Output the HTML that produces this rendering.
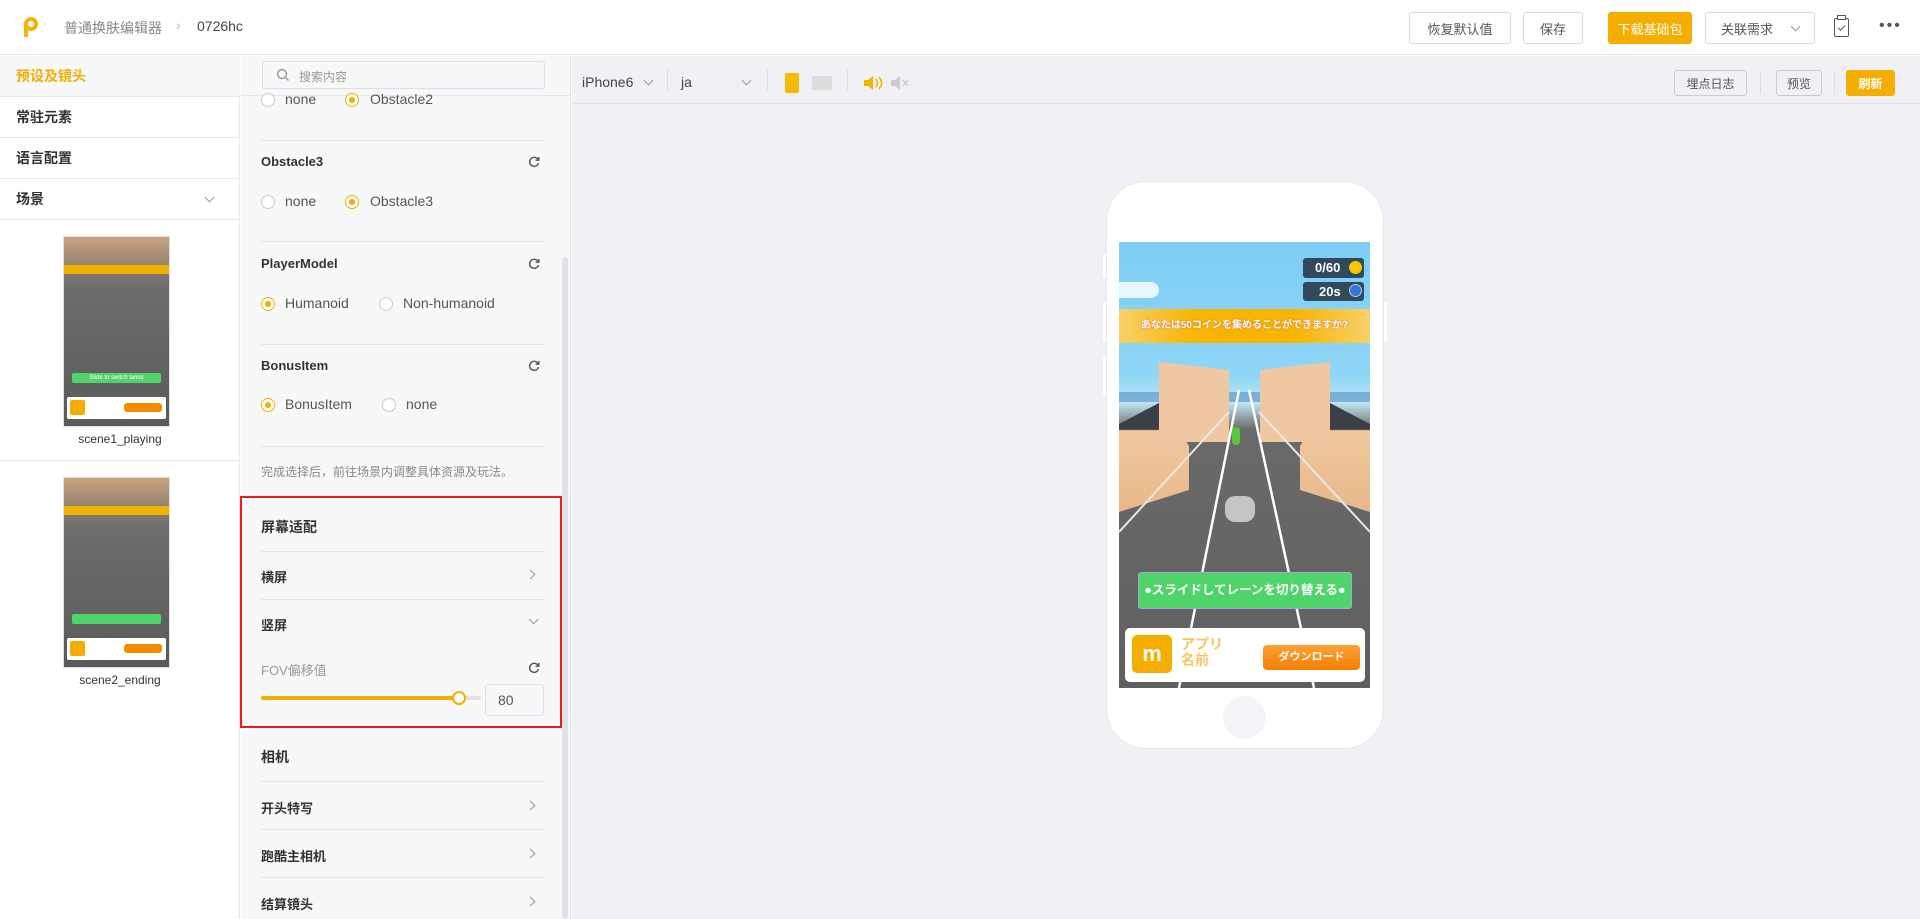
<!DOCTYPE html>
<html><head><meta charset="utf-8">
<style>
*{box-sizing:border-box;margin:0;padding:0}
body{width:1920px;height:919px;overflow:hidden;font-family:"Liberation Sans","Noto Sans CJK SC",sans-serif;font-size:13px;color:#333;background:#fff;position:relative}
.a{position:absolute}
.btn{position:absolute;border:1px solid #d9d9d9;border-radius:3px;background:#fff;font-size:13px;color:#555;display:flex;align-items:center;justify-content:center}
.y{background:#f5ad00;border-color:#f5ad00;color:#fff}
.nav{position:absolute;left:0;width:240px;height:41px;border-bottom:1px solid #e8e8e8;padding-left:16px;font-size:14px;font-weight:bold;color:#333;line-height:40px}
.rad{position:absolute;width:14px;height:14px;border:1px solid #ccc;border-radius:50%;background:#fff}
.rad.on{border-color:#f5ad00}
.rad.on::after{content:"";position:absolute;left:3px;top:3px;width:6px;height:6px;border-radius:50%;background:#f5ad00}
.lbl{position:absolute;font-size:14px;color:#555}
.ttl{position:absolute;left:261px;font-size:13px;font-weight:bold;color:#333}
.hr{position:absolute;left:261px;width:283px;height:1px;background:#e4e6ea}
.chev{position:absolute;width:7px;height:7px;border-right:1px solid #999;border-bottom:1px solid #999}
.ref{position:absolute;width:12px;height:12px}
.sep{position:absolute;width:1px;height:22px;background:#dcdde0}
</style></head><body>
<svg width="0" height="0" style="position:absolute"><symbol id="r" viewBox="0 0 12 12"><path d="M10 3.5A4.5 4.5 0 1 0 10.5 7" stroke="#555" stroke-width="1.4" fill="none"/><path d="M10.8 1v3.2H7.6" stroke="#555" stroke-width="1.4" fill="none"/></symbol></svg>
<!-- header -->
<div class="a" style="left:0;top:0;width:1920px;height:55px;border-bottom:1px solid #e5e5e5;background:#fff"></div>
<div class="a" style="left:24px;top:17px;width:14px;height:14px;border-radius:50%;border:4px solid #f5b400"></div>
<div class="a" style="left:24px;top:24px;width:4px;height:13px;background:#f5b400"></div>
<div class="a" style="left:64px;top:18px;font-size:14px;color:#888">普通换肤编辑器</div>
<div class="a" style="left:176px;top:17px;font-size:14px;color:#bbb">›</div>
<div class="a" style="left:197px;top:18px;font-size:14px;color:#444">0726hc</div>
<div class="btn" style="left:1409px;top:12px;width:102px;height:32px">恢复默认值</div>
<div class="btn" style="left:1523px;top:12px;width:60px;height:32px">保存</div>
<div class="btn y" style="left:1608px;top:12px;width:84px;height:32px">下载基础包</div>
<div class="btn" style="left:1705px;top:12px;width:110px;height:32px;justify-content:flex-start;padding-left:15px">关联需求<span class="chev" style="left:86px;top:10px;transform:rotate(45deg)"></span></div>
<div class="a" style="left:1834px;top:18px;width:15px;height:19px;border:1.5px solid #555;border-radius:2px"></div>
<div class="a" style="left:1837px;top:15px;width:9px;height:5px;border:1.5px solid #555;background:#fff"></div>
<div class="a" style="left:1838px;top:25px;width:7px;height:4px;border-left:1.5px solid #555;border-bottom:1.5px solid #555;transform:rotate(-45deg)"></div>
<div class="a" style="left:1879px;top:17px;font-size:16px;color:#555;letter-spacing:2px">•••</div>

<!-- left nav -->
<div class="a" style="left:0;top:55px;width:240px;height:864px;background:#fff;border-right:1px solid #e8e8e8"></div>
<div class="nav" style="top:56px;background:#f7f8fa;color:#f5ad00">预设及镜头</div>
<div class="nav" style="top:97px">常驻元素</div>
<div class="nav" style="top:138px">语言配置</div>
<div class="nav" style="top:179px">场景<span class="chev" style="left:206px;top:15px;transform:rotate(45deg)"></span></div>
<div class="a" style="left:63px;top:236px;width:107px;height:191px;border:1px solid #e0e0e0;background:linear-gradient(#caa27c 0,#6e6e6e 25%,#5a5a5a 100%);overflow:hidden">
<div class="a" style="left:0;top:28px;width:105px;height:9px;background:#f0b400"></div>
<div class="a" style="left:8px;top:136px;width:89px;height:10px;background:#4fd46a;border-radius:2px;font-size:6px;color:#fff;text-align:center;line-height:10px">Slide to switch lanes</div>
<div class="a" style="left:3px;top:160px;width:99px;height:22px;background:#fff;border-radius:2px"></div>
<div class="a" style="left:6px;top:163px;width:15px;height:15px;background:#f5ad00;border-radius:2px"></div>
<div class="a" style="left:60px;top:166px;width:38px;height:9px;background:#f58a00;border-radius:3px"></div>
</div>
<div class="a" style="left:0;top:432px;width:240px;text-align:center;font-size:12px;color:#333">scene1_playing</div>
<div class="a" style="left:0;top:460px;width:240px;height:1px;background:#e8e8e8"></div>
<div class="a" style="left:63px;top:477px;width:107px;height:191px;border:1px solid #e0e0e0;background:linear-gradient(#caa27c 0,#6e6e6e 25%,#5a5a5a 100%);overflow:hidden">
<div class="a" style="left:0;top:28px;width:105px;height:9px;background:#f0b400"></div>
<div class="a" style="left:8px;top:136px;width:89px;height:10px;background:#4fd46a;border-radius:2px"></div>
<div class="a" style="left:3px;top:160px;width:99px;height:22px;background:#fff;border-radius:2px"></div>
<div class="a" style="left:6px;top:163px;width:15px;height:15px;background:#f5ad00;border-radius:2px"></div>
<div class="a" style="left:60px;top:166px;width:38px;height:9px;background:#f58a00;border-radius:3px"></div>
</div>
<div class="a" style="left:0;top:673px;width:240px;text-align:center;font-size:12px;color:#333">scene2_ending</div>

<!-- middle -->
<div class="a" style="left:241px;top:56px;width:330px;height:863px;background:#f7f8fa;border-right:1px solid #e4e4e4"></div>
<div class="a" style="left:262px;top:61px;width:283px;height:28px;border:1px solid #dcdfe4;border-radius:3px;background:#f7f8fa"></div>
<svg class="a" style="left:276px;top:68px" width="14" height="14"><circle cx="6" cy="6" r="4.5" stroke="#999" stroke-width="1.4" fill="none"/><path d="M9.3 9.3L12.5 12.5" stroke="#999" stroke-width="1.4"/></svg>
<div class="a" style="left:299px;top:68px;font-size:12px;color:#999">搜索内容</div>
<div class="a" style="left:241px;top:95px;width:329px;height:1px;background:#e4e6ea"></div>
<div class="a" style="left:562px;top:257px;width:6px;height:662px;background:#e1e2e6;border-radius:3px"></div>

<div class="rad" style="left:261px;top:93px"></div><div class="lbl" style="left:285px;top:91px">none</div>
<div class="rad on" style="left:345px;top:93px"></div><div class="lbl" style="left:370px;top:91px">Obstacle2</div>
<div class="hr" style="top:140px"></div>
<div class="ttl" style="top:154px">Obstacle3</div><svg class="ref" style="left:528px;top:156px"><use href="#r"/></svg>
<div class="rad" style="left:261px;top:195px"></div><div class="lbl" style="left:285px;top:193px">none</div>
<div class="rad on" style="left:345px;top:195px"></div><div class="lbl" style="left:370px;top:193px">Obstacle3</div>
<div class="hr" style="top:241px"></div>
<div class="ttl" style="top:256px">PlayerModel</div><svg class="ref" style="left:528px;top:258px"><use href="#r"/></svg>
<div class="rad on" style="left:261px;top:297px"></div><div class="lbl" style="left:285px;top:295px">Humanoid</div>
<div class="rad" style="left:379px;top:297px"></div><div class="lbl" style="left:403px;top:295px">Non-humanoid</div>
<div class="hr" style="top:344px"></div>
<div class="ttl" style="top:358px">BonusItem</div><svg class="ref" style="left:528px;top:360px"><use href="#r"/></svg>
<div class="rad on" style="left:261px;top:398px"></div><div class="lbl" style="left:285px;top:396px">BonusItem</div>
<div class="rad" style="left:382px;top:398px"></div><div class="lbl" style="left:406px;top:396px">none</div>
<div class="hr" style="top:446px"></div>
<div class="a" style="left:261px;top:463px;font-size:12px;color:#888">完成选择后，前往场景内调整具体资源及玩法。</div>

<div class="a" style="left:240px;top:496px;width:322px;height:232px;border:2px solid #ee1c1c"></div>
<div class="ttl" style="top:517px;font-size:14px">屏幕适配</div>
<div class="hr" style="top:551px"></div>
<div class="ttl" style="top:567px">横屏</div><span class="chev" style="left:527px;top:571px;transform:rotate(-45deg)"></span>
<div class="hr" style="top:599px"></div>
<div class="ttl" style="top:615px">竖屏</div><span class="chev" style="left:530px;top:616px;transform:rotate(45deg)"></span>
<div class="a" style="left:261px;top:660px;font-size:13px;color:#999">FOV偏移值</div><svg class="ref" style="left:528px;top:662px"><use href="#r"/></svg>
<div class="a" style="left:261px;top:696px;width:220px;height:4px;background:#e2e2e2;border-radius:2px"></div>
<div class="a" style="left:261px;top:696px;width:198px;height:4px;background:#f5ad00;border-radius:2px"></div>
<div class="a" style="left:452px;top:691px;width:14px;height:14px;border:2px solid #f5ad00;border-radius:50%;background:#fff"></div>
<div class="a" style="left:485px;top:684px;width:59px;height:32px;border:1px solid #dcdfe4;border-radius:3px;background:#f7f8fa;font-size:14px;color:#555;line-height:30px;padding-left:12px">80</div>

<div class="ttl" style="top:747px;font-size:14px">相机</div>
<div class="hr" style="top:781px"></div>
<div class="ttl" style="top:798px">开头特写</div><span class="chev" style="left:527px;top:802px;transform:rotate(-45deg)"></span>
<div class="hr" style="top:829px"></div>
<div class="ttl" style="top:846px">跑酷主相机</div><span class="chev" style="left:527px;top:850px;transform:rotate(-45deg)"></span>
<div class="hr" style="top:877px"></div>
<div class="ttl" style="top:894px">结算镜头</div><span class="chev" style="left:527px;top:898px;transform:rotate(-45deg)"></span>

<!-- preview -->
<div class="a" style="left:572px;top:56px;width:1348px;height:863px;background:#f0f1f5"></div>
<div class="a" style="left:572px;top:103px;width:1348px;height:1px;background:#dfe0e4"></div>
<div class="a" style="left:582px;top:74px;font-size:14px;color:#444">iPhone6</div><span class="chev" style="left:645px;top:77px;transform:rotate(45deg)"></span>
<div class="sep" style="left:667px;top:69px"></div>
<div class="a" style="left:681px;top:74px;font-size:14px;color:#444">ja</div><span class="chev" style="left:743px;top:77px;transform:rotate(45deg)"></span>
<div class="sep" style="left:767px;top:69px"></div>
<div class="a" style="left:785px;top:73px;width:14px;height:20px;background:#f5bb00;border-radius:2px"></div>
<div class="a" style="left:812px;top:76px;width:20px;height:14px;background:#dcdcdc;border-radius:2px"></div>
<div class="sep" style="left:847px;top:69px"></div>
<svg class="a" style="left:862px;top:74px" width="50" height="18"><path d="M2 6h4l5-4v14l-5-4H2z" fill="#f5b400"/><path d="M14 5q3 4 0 8M17 3q5 6 0 12" stroke="#f5b400" stroke-width="1.6" fill="none"/><path d="M29 6h4l5-4v14l-5-4h-4z" fill="#ccc"/><path d="M41 6l5 6M46 6l-5 6" stroke="#ccc" stroke-width="1.5"/></svg>
<div class="btn" style="left:1674px;top:70px;width:73px;height:26px;font-size:12px;background:#f0f1f5;border-color:#c9cbd0">埋点日志</div>
<div class="sep" style="left:1760px;top:72px"></div>
<div class="btn" style="left:1776px;top:70px;width:46px;height:26px;font-size:12px;background:#f0f1f5;border-color:#c9cbd0">预览</div>
<div class="sep" style="left:1834px;top:72px"></div>
<div class="btn y" style="left:1846px;top:70px;width:49px;height:26px;font-size:12px;font-weight:bold">刷新</div>

<!-- phone -->
<div class="a" style="left:1103px;top:254px;width:4px;height:24px;background:#fff;border-radius:2px"></div>
<div class="a" style="left:1103px;top:302px;width:4px;height:40px;background:#fff;border-radius:2px"></div>
<div class="a" style="left:1103px;top:356px;width:4px;height:40px;background:#fff;border-radius:2px"></div>
<div class="a" style="left:1383px;top:302px;width:4px;height:40px;background:#fff;border-radius:2px"></div>
<div class="a" style="left:1106px;top:181px;width:278px;height:568px;background:#fff;border-radius:40px;border:1px solid #e6e7ea"></div>
<div class="a" style="left:1223px;top:696px;width:43px;height:43px;border-radius:50%;background:#f2f4f7"></div>
<div class="a" style="left:1119px;top:242px;width:251px;height:446px;overflow:hidden;background:linear-gradient(#7dcdf5 0%,#8fd6f7 30%,#bfe6f4 36%,#6a6a6a 42%,#5f5f5f 100%)">
  <div class="a" style="left:-10px;top:40px;width:50px;height:16px;background:#fff;border-radius:8px;opacity:.8"></div>
  <div class="a" style="left:0;top:150px;width:251px;height:10px;background:#3e7fc0;opacity:.5"></div>
  <div class="a" style="left:0;top:160px;width:70px;height:110px;background:linear-gradient(#3d3f48 0,#3d3f48 25%,#f0c9a0 26%,#e8b789 100%);clip-path:polygon(0 20%,60% 0,100% 40%,100% 80%,0 100%)"></div>
  <div class="a" style="left:181px;top:160px;width:70px;height:110px;background:linear-gradient(#3d3f48 0,#3d3f48 25%,#f0c9a0 26%,#e8b789 100%);clip-path:polygon(40% 0,100% 20%,100% 100%,0 80%,0 40%)"></div>
  <div class="a" style="left:40px;top:120px;width:70px;height:80px;background:#efc8a2;clip-path:polygon(0 0,100% 10%,100% 100%,0 100%)"></div>
  <div class="a" style="left:141px;top:120px;width:70px;height:80px;background:#efc8a2;clip-path:polygon(0 10%,100% 0,100% 100%,0 100%)"></div>
  <svg class="a" style="left:0;top:0" width="251" height="446"><path d="M120 148 L60 446 M130 148 L195 446" stroke="#fff" stroke-width="2.5"/><path d="M110 170 L0 290 M140 170 L251 290" stroke="#e8e8e8" stroke-width="2"/></svg>
  <div class="a" style="left:0;top:67px;width:251px;height:34px;background:linear-gradient(90deg,#f7d06a,#f7b500 30%,#f7b500 70%,#f7d06a);color:#fff;font-size:10px;font-weight:bold;text-align:center;line-height:34px;text-shadow:0 0 2px #c66">あなたは50コインを集めることができますか?</div>
  <div class="a" style="left:184px;top:16px;width:61px;height:20px;background:#2e4a5c;border-radius:3px;color:#fff;font-size:13px;font-weight:bold;line-height:20px;padding-left:12px">0/60</div>
  <div class="a" style="left:230px;top:19px;width:13px;height:13px;border-radius:50%;background:#f5c800"></div>
  <div class="a" style="left:184px;top:40px;width:61px;height:19px;background:#2e4a5c;border-radius:3px;color:#fff;font-size:13px;font-weight:bold;line-height:19px;padding-left:16px">20s</div>
  <div class="a" style="left:230px;top:42px;width:13px;height:13px;border-radius:50%;background:#3a72d8;border:1.5px solid #bcd"></div>
  <div class="a" style="left:113px;top:185px;width:8px;height:18px;background:#5cc63a;border-radius:4px"></div>
  <div class="a" style="left:106px;top:254px;width:30px;height:26px;background:#ddd;border-radius:10px;opacity:.8"></div>
  <div class="a" style="left:19px;top:330px;width:214px;height:37px;background:#4fd46a;border:1px solid #9ad;border-radius:3px;color:#fff;font-size:12.5px;font-weight:bold;text-align:center;line-height:35px">●スライドしてレーンを切り替える●</div>
  <div class="a" style="left:6px;top:386px;width:240px;height:54px;background:#fff;border-radius:5px"></div>
  <div class="a" style="left:13px;top:393px;width:40px;height:38px;background:#f5ad00;border-radius:5px;color:#fff;font-size:22px;font-weight:bold;text-align:center;line-height:38px">m</div>
  <div class="a" style="left:62px;top:394px;font-size:14px;font-weight:bold;color:#f8c560;line-height:16px">アプリ<br>名前</div>
  <div class="a" style="left:144px;top:403px;width:97px;height:25px;background:linear-gradient(#ffa033,#f57f00);border-radius:4px;color:#fff;font-size:11px;font-weight:bold;text-align:center;line-height:25px">ダウンロード</div>
</div>
</body></html>
